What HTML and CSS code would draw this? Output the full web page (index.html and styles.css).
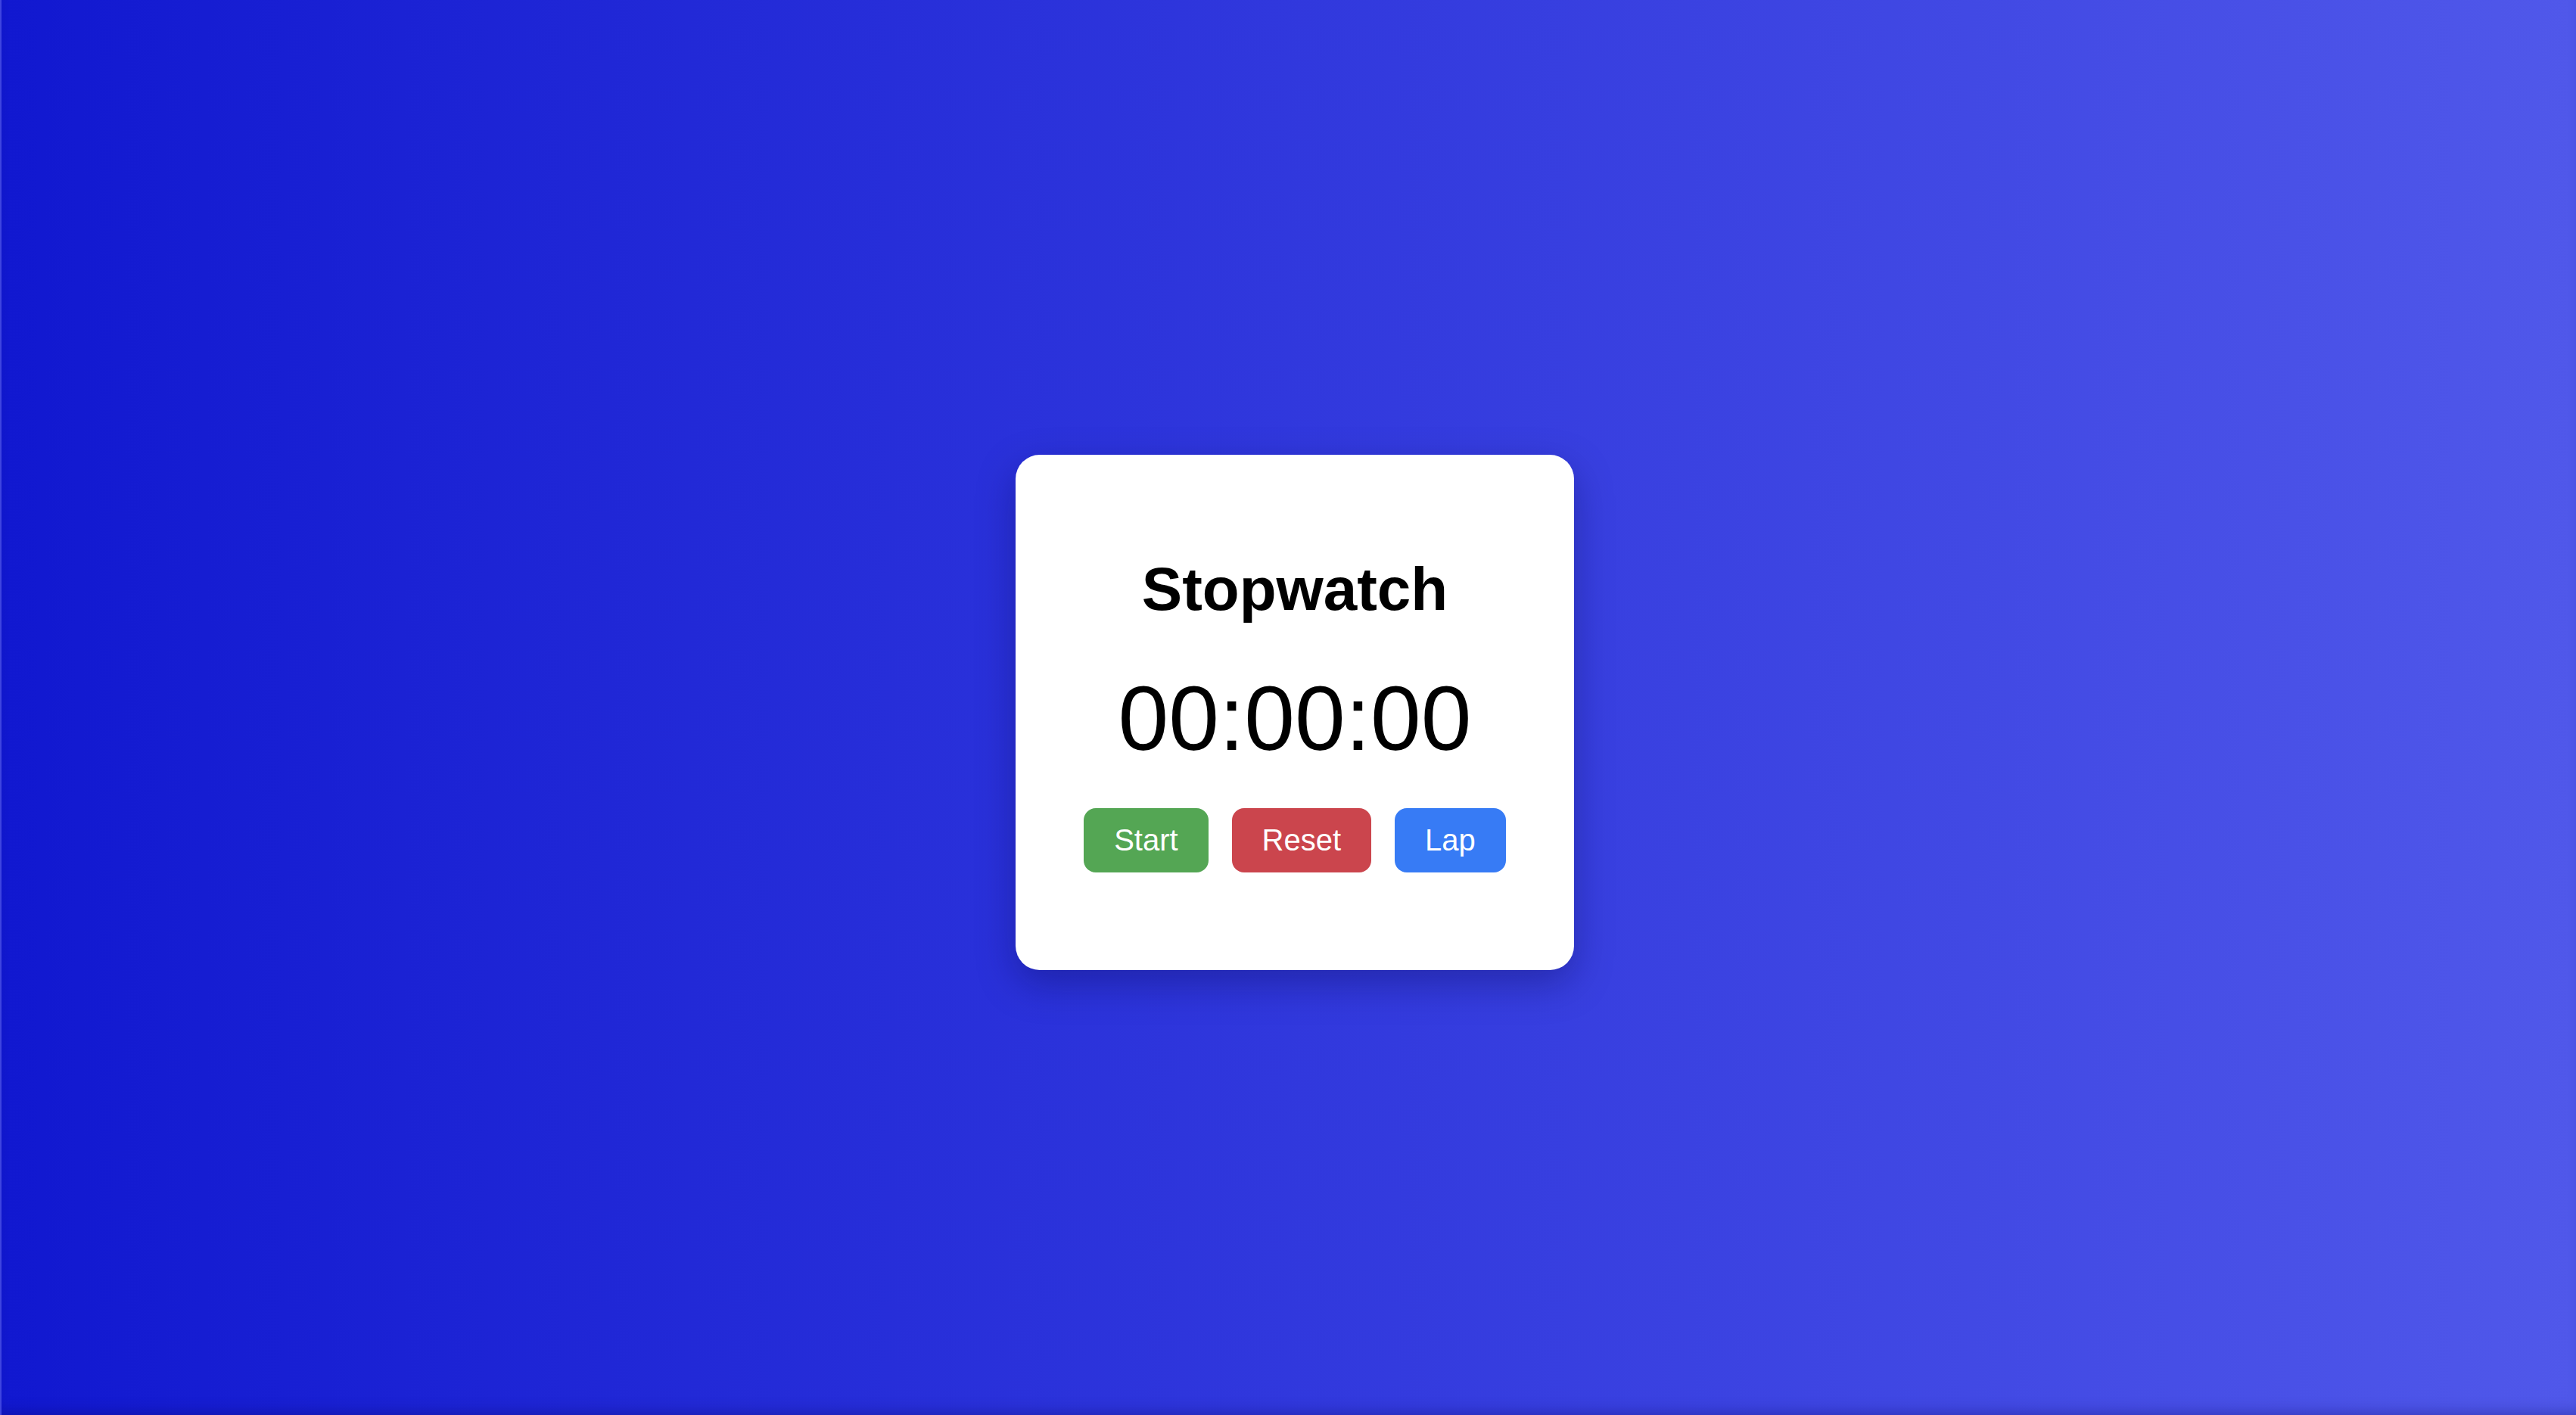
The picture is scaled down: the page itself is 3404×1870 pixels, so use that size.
FILE: index.html
```html
<!DOCTYPE html>
<html lang="en">
<head>
<meta charset="utf-8">
<title>Stopwatch</title>
<link rel="stylesheet" href="styles.css">
</head>
<body>
<div class="page">
  <div class="card">
    <h1 class="title">Stopwatch</h1>
    <div class="timer">00:00:00</div>
    <div class="controls">
      <button class="btn btn-start">Start</button>
      <button class="btn btn-reset">Reset</button>
      <button class="btn btn-lap">Lap</button>
    </div>
  </div>
</div>
</body>
</html>
```
FILE: styles.css
```css
html, body {
  margin: 0;
  padding: 0;
  height: 100%;
}
body {
  font-family: "Liberation Sans", Arial, Helvetica, sans-serif;
  background: linear-gradient(to right, #1118d0, #5058ea);
  overflow: hidden;
}
.page {
  box-sizing: border-box;
  min-height: 100vh;
  display: flex;
  align-items: center;
  justify-content: center;
  padding-left: 16px;
  padding-top: 13px;
  border-left: 2px solid #3f45e0;
  box-shadow: inset 0 -14px 20px -12px rgba(10, 10, 90, 0.35);
}
.card {
  box-sizing: border-box;
  width: 738px;
  height: 681px;
  background: #ffffff;
  border-radius: 32px;
  padding: 133px 0 0;
  display: flex;
  flex-direction: column;
  align-items: center;
  box-shadow: 0 18px 50px rgba(10, 10, 80, 0.35);
}
.title {
  margin: 0;
  font-size: 80px;
  line-height: 90px;
  font-weight: 700;
  color: #000;
}
.timer {
  margin-top: 56px;
  font-size: 120px;
  line-height: 138px;
  color: #000;
}
.controls {
  margin-top: 50px;
  display: flex;
  gap: 31px;
}
.btn {
  font-family: "Liberation Sans", Arial, Helvetica, sans-serif;
  font-size: 40px;
  line-height: 45px;
  padding: 20px 40px;
  border: none;
  border-radius: 16px;
  color: #ffffff;
  cursor: pointer;
}
.btn-start { background: #54a654; }
.btn-reset { background: #cb454d; }
.btn-lap { background: #377bf5; }
```
